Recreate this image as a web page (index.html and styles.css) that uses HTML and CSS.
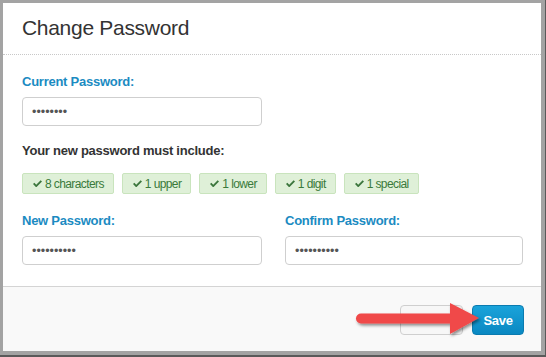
FILE: index.html
```html
<!DOCTYPE html>
<html>
<head>
<meta charset="utf-8">
<link rel="stylesheet" href="styles.css">
</head>
<body>
<div class="frame">
  <div class="modal">
    <div class="modal-header">Change Password</div>
    <div class="modal-body">
      <label class="label">Current Password:</label>
      <div class="half"><input class="input" type="password" value="xxxxxxxx"></div>
      <div class="rules-title">Your new password must include:</div>
      <div class="badges">
        <span class="badge"><svg class="check" viewBox="0 0 10 8"><path d="M0 4.4 L1.5 2.9 L3.6 5 L8.5 0.1 L10 1.6 L3.6 8 Z"/></svg>8 characters</span>
        <span class="badge"><svg class="check" viewBox="0 0 10 8"><path d="M0 4.4 L1.5 2.9 L3.6 5 L8.5 0.1 L10 1.6 L3.6 8 Z"/></svg>1 upper</span>
        <span class="badge"><svg class="check" viewBox="0 0 10 8"><path d="M0 4.4 L1.5 2.9 L3.6 5 L8.5 0.1 L10 1.6 L3.6 8 Z"/></svg>1 lower</span>
        <span class="badge"><svg class="check" viewBox="0 0 10 8"><path d="M0 4.4 L1.5 2.9 L3.6 5 L8.5 0.1 L10 1.6 L3.6 8 Z"/></svg>1 digit</span>
        <span class="badge"><svg class="check" viewBox="0 0 10 8"><path d="M0 4.4 L1.5 2.9 L3.6 5 L8.5 0.1 L10 1.6 L3.6 8 Z"/></svg>1 special</span>
      </div>
      <div class="grid">
        <div class="field">
          <label class="label">New Password:</label>
          <input class="input" type="password" value="xxxxxxxxxx">
        </div>
        <div class="field">
          <label class="label">Confirm Password:</label>
          <input class="input" type="password" value="xxxxxxxxxx">
        </div>
      </div>
    </div>
    <div class="modal-footer">
      <button class="btn btn-default"></button>
      <button class="btn btn-primary">Save</button>
      <svg class="arrow" width="150" height="50" viewBox="0 0 150 50">
        <defs>
          <filter id="sh" x="-20%" y="-40%" width="140%" height="180%">
            <feDropShadow dx="1.5" dy="2" stdDeviation="1.6" flood-color="#000" flood-opacity="0.45"/>
          </filter>
        </defs>
        <g filter="url(#sh)" fill="#f04848">
          <path d="M15 20.5 L106 20.5 L106 30.5 L15 30.5 A5 5 0 0 1 15 20.5 Z"/>
          <path d="M104 10 L133 25 L104 41 Z"/>
        </g>
      </svg>
    </div>
  </div>
</div>
</body>
</html>
```

FILE: styles.css
```css
html, body {
  margin: 0;
  padding: 0;
}
body {
  width: 546px;
  height: 357px;
  overflow: hidden;
  font-family: "Liberation Sans", Arial, sans-serif;
}
.frame {
  box-sizing: border-box;
  width: 546px;
  height: 357px;
  background: #a3a3a3;
  border-right: 1px solid #5a5a5a;
  border-bottom: 2px solid #5a5a5a;
  padding: 3px 4px 4px 3px;
}
.modal {
  width: 538px;
  height: 348px;
  background: #fff;
  display: flex;
  flex-direction: column;
}
.modal-header {
  font-size: 21px;
  letter-spacing: -0.3px;
  line-height: 25px;
  color: #333;
  padding: 12px 19px 14px;
  border-bottom: 1px dotted #c8c8c8;
}
.modal-body {
  padding: 18px 18px 0 19px;
  flex: 1;
}
.label {
  display: block;
  font-size: 13px;
  font-weight: bold;
  letter-spacing: -0.25px;
  line-height: 18px;
  color: #1b8bc2;
  margin-bottom: 6px;
}
.half {
  width: 240px;
}
.input {
  box-sizing: border-box;
  display: block;
  width: 100%;
  height: 29px;
  border: 1px solid #cfcfcf;
  border-radius: 4px;
  padding: 0 9px;
  font-family: "Liberation Sans", Arial, sans-serif;
  font-size: 12.5px;
  color: #555;
  background: #fff;
  outline: none;
}
.rules-title {
  font-size: 13px;
  font-weight: bold;
  letter-spacing: -0.25px;
  line-height: 18px;
  color: #333;
  margin-top: 16px;
}
.badges {
  display: flex;
  gap: 8px;
  margin-top: 13px;
}
.badge {
  box-sizing: border-box;
  height: 21px;
  display: inline-flex;
  align-items: center;
  gap: 3px;
  padding: 0 9px 0 10px;
  background: #dff0d8;
  border: 1px solid #c9e4bd;
  border-radius: 2px;
  color: #3a7a3b;
  font-size: 12px;
  letter-spacing: -0.6px;
}
.check {
  width: 9px;
  height: 7.5px;
  fill: #3c763d;
}
.grid {
  display: grid;
  grid-template-columns: 240px 238px;
  column-gap: 23px;
  margin-top: 18px;
}
.modal-footer {
  position: relative;
  height: 65px;
  border-top: 1px solid #d4d4d4;
  background: #f9f9f9;
  display: flex;
  justify-content: flex-end;
  align-items: flex-start;
  gap: 9px;
  padding: 18px 17px 0 0;
  box-sizing: border-box;
}
.btn {
  box-sizing: border-box;
  height: 30px;
  border-radius: 4px;
  font-family: "Liberation Sans", Arial, sans-serif;
  padding: 0;
}
.btn-default {
  width: 63px;
  background: #f7f7f7;
  border: 1px solid #cfcfcf;
}
.btn-primary {
  width: 52px;
  background: linear-gradient(#1aa3da, #0a88c2);
  border: 1px solid #0a7bb0;
  color: #fff;
  font-size: 13px;
  font-weight: bold;
  letter-spacing: -0.3px;
}
.arrow {
  position: absolute;
  left: 343px;
  top: 6px;
}
```
